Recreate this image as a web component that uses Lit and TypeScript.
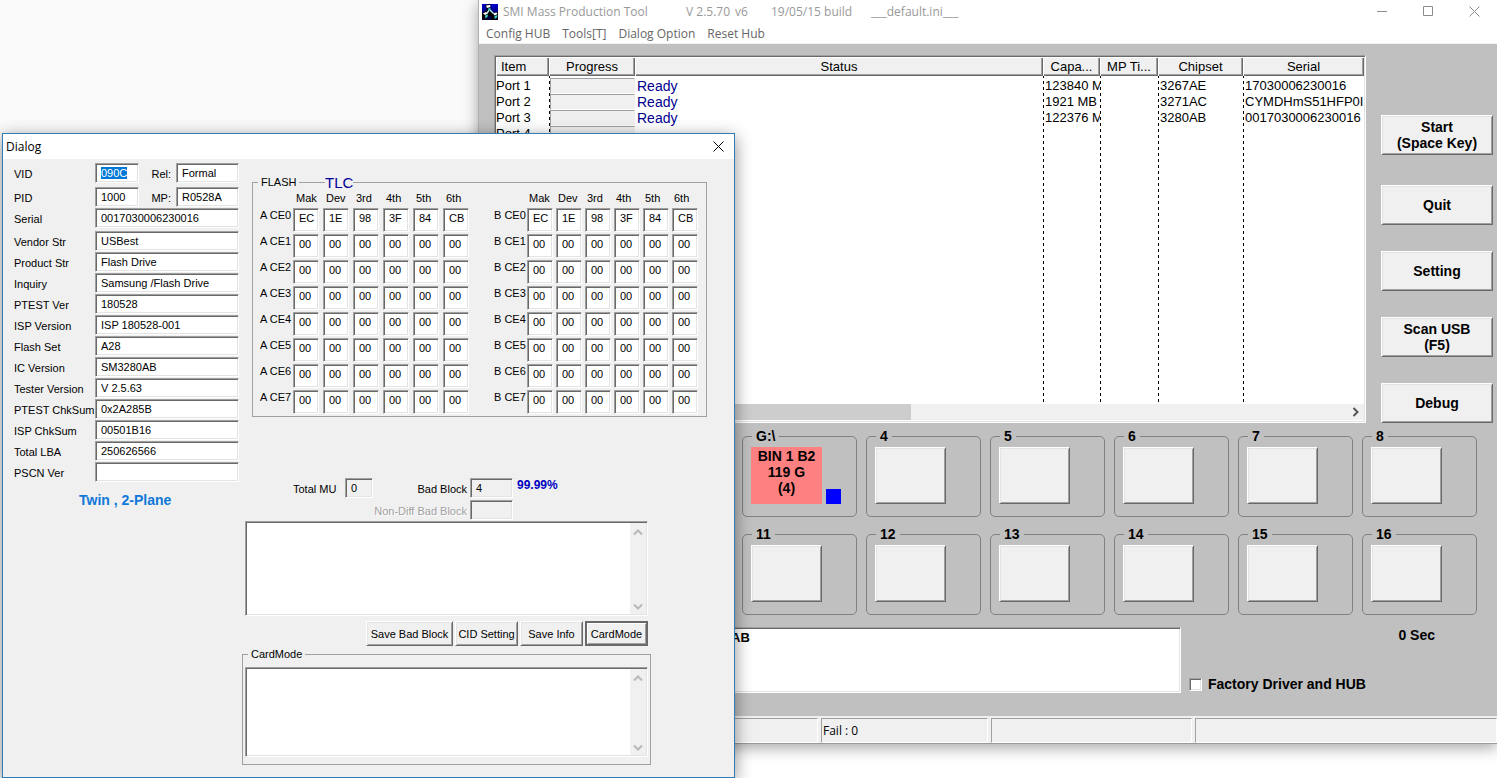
import { LitElement, html, css, svg, nothing } from "lit";
import { customElement, property } from "lit/decorators.js";
import { classMap } from "lit/directives/class-map.js";

const classic = css`
  * {
    box-sizing: border-box;
  }
  button,
  input,
  textarea {
    font: inherit;
    color: inherit;
    margin: 0;
    border-radius: 0;
    outline: none;
  }
  fieldset {
    margin: 0;
    padding: 0;
    min-width: 0;
  }
  .raised {
    padding: 0;
    background: #f0f0f0;
    border: 1px solid;
    border-color: #fff #696969 #696969 #fff;
    box-shadow: inset 1px 1px #e3e3e3, inset -1px -1px #a0a0a0;
  }
  .sunken {
    background: #fff;
    border: 1px solid;
    border-color: #a0a0a0 #fff #fff #a0a0a0;
    box-shadow: inset 1px 1px #696969, inset -1px -1px #e3e3e3;
  }
`;

const closeGlyph = svg`<path d="M0.5 0.5 L10.5 10.5 M10.5 0.5 L0.5 10.5" />`;

interface Port {
  label: string;
  lines?: string[];
}

const PORT_ROWS: Port[][] = [
  [
    { label: "G:\\", lines: ["BIN 1 B2", "119 G", "(4)"] },
    { label: "4" },
    { label: "5" },
    { label: "6" },
    { label: "7" },
    { label: "8" },
  ],
  ["11", "12", "13", "14", "15", "16"].map((label) => ({ label })),
];

const DEVICES = [
  ["Port 1", "Ready", "123840 M", "", "3267AE", "17030006230016"],
  ["Port 2", "Ready", "1921 MB", "", "3271AC", "CYMDHmS51HFP0I"],
  ["Port 3", "Ready", "122376 M", "", "3280AB", "0017030006230016"],
  ["Port 4", "", "", "", "", ""],
];

@customElement("production-window")
export class ProductionWindow extends LitElement {
  static styles = [
    classic,
    css`
      :host {
        display: block;
        background: #fff;
        border-left: 1px solid #b0b0b0;
        border-bottom: 1px solid #999;
        box-shadow: 0 4px 14px rgba(0, 0, 0, 0.35);
        font: 13px/16px "Liberation Sans", Arial, sans-serif;
        color: #000;
      }
      .title {
        display: flex;
        align-items: center;
        height: 23px;
        padding-left: 3px;
        font: 12px/16px "Open Sans", "Noto Sans", sans-serif;
        color: #999;
        white-space: pre;
      }
      .title .logo {
        width: 16px;
        height: 16px;
        margin-right: 5px;
      }
      .name {
        width: 183px;
      }
      .version {
        width: 49px;
      }
      .revision {
        width: 36px;
      }
      .build {
        width: 100px;
      }
      .controls {
        display: flex;
        margin-left: auto;
      }
      .controls button {
        width: 46px;
        height: 23px;
        padding: 0;
        border: 0;
        background: none;
      }
      .controls svg {
        display: block;
        margin: auto;
        fill: none;
        stroke: #8c8c8c;
      }
      .menu {
        display: flex;
        gap: 12px;
        height: 21px;
        padding: 2px 0 0 7px;
        border-bottom: 1px solid #f0f0f0;
        font: 12px/16px "Open Sans", "Noto Sans", sans-serif;
      }
      .menu button {
        padding: 0;
        border: 0;
        background: none;
        color: #666;
      }
      .client {
        padding: 11px 4px 23px 15px;
        background: #c0c0c0;
      }
      .upper {
        display: flex;
        gap: 15px;
      }
      .list {
        flex: 1;
        min-width: 0;
        padding: 1px;
        overflow: hidden;
      }
      table {
        width: 100%;
        table-layout: fixed;
        border-collapse: collapse;
      }
      .c-item {
        width: 53px;
      }
      .c-progress {
        width: 86px;
      }
      .c-capacity {
        width: 57px;
      }
      .c-time {
        width: 58px;
      }
      .c-chip {
        width: 85px;
      }
      .c-serial {
        width: 121px;
      }
      .ruled {
        background: repeating-linear-gradient(#000 0 3px, transparent 3px 6px) left top / 1px 100% no-repeat;
      }
      th {
        height: 19px;
        padding: 0 5px;
        overflow: hidden;
        background: #f0f0f0;
        box-shadow: inset 1px 1px #fff, inset -1px -1px #696969, inset -2px -2px #a0a0a0;
        font-weight: normal;
        text-overflow: ellipsis;
        white-space: nowrap;
      }
      th.left {
        text-align: left;
      }
      td {
        height: 16px;
        padding: 0 0 0 2px;
        overflow: hidden;
        white-space: nowrap;
      }
      td.item {
        padding-left: 0;
      }
      td.meter {
        padding: 0 0 0 1px;
      }
      td.ready {
        color: #000090;
        font-size: 14px;
      }
      .bar {
        height: 16px;
        background: #f0f0f0;
        border: 1px solid;
        border-color: #a0a0a0 #f0f0f0 #fff #a0a0a0;
      }
      .gap td {
        height: 2px;
      }
      .rest td {
        height: 262px;
      }
      .scroll {
        display: flex;
        align-items: center;
        height: 16px;
        padding: 0 4px 0 16px;
        background: #f0f0f0;
      }
      .thumb {
        width: 47%;
        height: 16px;
        margin-right: auto;
        background: #cdcdcd;
      }
      .commands {
        display: flex;
        flex-direction: column;
        gap: 26px;
        width: 112px;
        padding-top: 60px;
      }
      .commands button {
        height: 40px;
        font-size: 14px;
        font-weight: bold;
        white-space: pre-line;
      }
      .commands .primary {
        margin-bottom: 4px;
      }
      .ports {
        display: grid;
        grid-template-columns: repeat(8, 1fr);
        gap: 9px;
        padding: 5px 16px 0 0;
        font-size: 14px;
        font-weight: bold;
      }
      .vacant {
        grid-column: span 2;
      }
      .port {
        height: 89px;
        border: 1px solid #808080;
        border-radius: 5px;
      }
      .port legend {
        margin-left: 9px;
        padding: 0 4px;
      }
      .slot {
        display: flex;
        align-items: flex-end;
        gap: 4px;
        padding: 3px 0 0 8px;
      }
      .slot button {
        width: 71px;
        height: 57px;
      }
      .slot .pass {
        padding: 0 0 8px;
        background: #ff8080;
        border: 0;
        box-shadow: none;
      }
      .pass span {
        display: block;
      }
      .lamp {
        width: 15px;
        height: 15px;
        background: #00f;
      }
      .lower {
        display: flex;
        gap: 8px;
        padding-top: 12px;
        font-size: 14px;
        font-weight: bold;
      }
      .log {
        flex: 1;
        min-width: 0;
        height: 66px;
        padding: 2px 4px 0 236px;
        font-size: 13px;
        resize: none;
        overflow: hidden;
      }
      .side {
        display: flex;
        flex-direction: column;
        justify-content: space-between;
        width: 304px;
        padding-bottom: 1px;
      }
      .timer {
        padding-right: 58px;
        text-align: right;
      }
      .check {
        display: flex;
        align-items: center;
        gap: 6px;
      }
      .check input {
        appearance: none;
        width: 13px;
        height: 13px;
      }
      .status {
        display: grid;
        grid-template-columns: 339px 167px 201px 1fr;
        gap: 3px;
        padding: 2px 0 0;
        background: #f0f0f0;
        font: 12px/16px "Open Sans", "Noto Sans", sans-serif;
      }
      .status span {
        height: 25px;
        padding: 4px 0 0 1px;
        border: 1px solid;
        border-color: #a0a0a0 #fff #fff #a0a0a0;
      }
    `,
  ];

  private renderPort(port: Port) {
    return html`<fieldset class="port">
      <legend>${port.label}</legend>
      <div class="slot">
        <button
          class=${classMap({ raised: true, pass: !!port.lines })}
          aria-label=${port.lines ? nothing : `Port ${port.label}`}
        >
          ${port.lines?.map((line) => html`<span>${line}</span>`)}
        </button>
        ${port.lines ? html`<div class="lamp"></div>` : nothing}
      </div>
    </fieldset>`;
  }

  render() {
    return html`
      <header class="title">
        <svg class="logo" viewBox="0 0 16 16">
          <defs>
            <linearGradient id="sky" x1="0" y1="0" x2="0" y2="1">
              <stop offset="0" stop-color="#0000d0" />
              <stop offset="1" stop-color="#000030" />
            </linearGradient>
          </defs>
          <rect width="16" height="16" fill="url(#sky)" />
          <path d="M3 1 L8 0 L9 6 L12 9 L16 8 V15 L10 16 L9 12 L6 12 L5 16 L0 14 V9 L4 7 L5 6 Z" fill="#000" />
          <path d="M4 1.5 L8 1 L8.5 3 L5 4 Z M1 9.5 L4 8 L6 9.5 L3 11 Z M11 9.5 L14.5 8.5 L15.5 10 L12.5 11.5 Z" fill="#fff" />
          <path d="M6 4.5 L8.5 4 L8.5 6 L6.5 7 Z M3 11.5 L6 10.5 L5.5 13 L3.5 14.5 Z M12.5 12 L15.5 11 L15 13.5 L12.5 15 Z" fill="#40d0d0" />
          <path d="M7 6.5 L5 9 M8 6 L11.5 9.5" stroke="#b0f0f0" stroke-width="1.4" fill="none" />
        </svg>
        <span class="name">SMI Mass Production Tool</span>
        <span class="version">V 2.5.70</span>
        <span class="revision">v6</span>
        <span class="build">19/05/15 build</span>
        <span>___default.ini___</span>
        <div class="controls">
          <button aria-label="Minimize"><svg width="11" height="11"><path d="M0 5.5 H10" /></svg></button>
          <button aria-label="Maximize"><svg width="11" height="11"><path d="M0.5 0.5 H9.5 V9.5 H0.5 Z" /></svg></button>
          <button aria-label="Close"><svg width="11" height="11">${closeGlyph}</svg></button>
        </div>
      </header>
      <nav class="menu">
        ${["Config HUB", "Tools[T]", "Dialog Option", "Reset Hub"].map((m) => html`<button>${m}</button>`)}
      </nav>
      <main class="client">
        <div class="upper">
          <div class="list sunken">
            <table>
              <colgroup>
                <col class="c-item" />
                <col class="c-progress ruled" />
                <col />
                <col class="c-capacity ruled" />
                <col class="c-time ruled" />
                <col class="c-chip ruled" />
                <col class="c-serial ruled" />
              </colgroup>
              <thead>
                <tr>
                  <th class="left">Item</th>
                  <th>Progress</th>
                  <th>Status</th>
                  <th>Capa...</th>
                  <th>MP Ti...</th>
                  <th>Chipset</th>
                  <th>Serial</th>
                </tr>
              </thead>
              <tbody>
                <tr class="gap"><td></td><td></td><td></td><td></td><td></td><td></td><td></td></tr>
                ${DEVICES.map(
                  ([item, state, capacity, time, chip, serial]) => html`<tr>
                    <td class="item">${item}</td>
                    <td class="meter"><div class="bar"></div></td>
                    <td class="ready">${state}</td>
                    <td>${capacity}</td>
                    <td>${time}</td>
                    <td>${chip}</td>
                    <td>${serial}</td>
                  </tr>`,
                )}
                <tr class="rest"><td></td><td></td><td></td><td></td><td></td><td></td><td></td></tr>
              </tbody>
            </table>
            <div class="scroll">
              <div class="thumb"></div>
              <svg width="8" height="10" fill="none" stroke="#555" stroke-width="2"><path d="M1.5 1 L5.5 5 L1.5 9" /></svg>
            </div>
          </div>
          <div class="commands">
            <button class="raised primary">${"Start\n(Space Key)"}</button>
            <button class="raised">Quit</button>
            <button class="raised">Setting</button>
            <button class="raised">${"Scan USB\n(F5)"}</button>
            <button class="raised">Debug</button>
          </div>
        </div>
        <div class="ports">
          ${PORT_ROWS.map((row) => html`<div class="vacant"></div>${row.map((p) => this.renderPort(p))}`)}
        </div>
        <div class="lower">
          <textarea class="log sunken" aria-label="Log" .value=${"AB"}></textarea>
          <div class="side">
            <div class="timer">0 Sec</div>
            <label class="check"><input type="checkbox" class="sunken" />Factory Driver and HUB</label>
          </div>
        </div>
      </main>
      <footer class="status"><span></span><span>Fail : 0</span><span></span><span></span></footer>
    `;
  }
}

const FIELDS: [string, string][] = [
  ["Vendor Str", "USBest"],
  ["Product Str", "Flash Drive"],
  ["Inquiry", "Samsung /Flash Drive"],
  ["PTEST Ver", "180528"],
  ["ISP Version", "ISP 180528-001"],
  ["Flash Set", "A28"],
  ["IC Version", "SM3280AB"],
  ["Tester Version", "V 2.5.63"],
  ["PTEST ChkSum", "0x2A285B"],
  ["ISP ChkSum", "00501B16"],
  ["Total LBA", "250626566"],
  ["PSCN Ver", ""],
];

const FLASH_HEADS = ["Mak", "Dev", "3rd", "4th", "5th", "6th"];
const FLASH_ID = ["EC", "1E", "98", "3F", "84", "CB"];

@customElement("flash-table")
export class FlashTable extends LitElement {
  @property() bank = "A";

  static styles = [
    classic,
    css`
      :host {
        display: block;
      }
      table {
        border-collapse: collapse;
      }
      th {
        padding: 0;
        font-weight: normal;
        text-align: left;
        vertical-align: top;
        white-space: nowrap;
      }
      thead th {
        height: 17px;
        padding-left: 3px;
      }
      thead th.corner {
        width: 33px;
        padding: 0;
      }
      td {
        height: 26px;
        padding: 0 4px 0 0;
        vertical-align: top;
      }
      :host([bank="B"]) td {
        padding-right: 3px;
      }
      :host([bank="B"]) thead th {
        padding-left: 2px;
      }
      input {
        display: block;
        width: 26px;
        height: 24px;
        padding: 0 0 4px 5px;
      }
    `,
  ];

  render() {
    return html`<table>
      <thead>
        <tr>
          <th class="corner"></th>
          ${FLASH_HEADS.map((h) => html`<th>${h}</th>`)}
        </tr>
      </thead>
      <tbody>
        ${[0, 1, 2, 3, 4, 5, 6, 7].map(
          (ce) => html`<tr>
            <th>${this.bank} CE${ce}</th>
            ${FLASH_HEADS.map(
              (h, i) => html`<td>
                <input class="sunken" aria-label="${this.bank} CE${ce} ${h}" .value=${ce === 0 ? FLASH_ID[i] : "00"} />
              </td>`,
            )}
          </tr>`,
        )}
      </tbody>
    </table>`;
  }
}

@customElement("info-dialog")
export class InfoDialog extends LitElement {
  static styles = [
    classic,
    css`
      :host {
        display: block;
        background: #f0f0f0;
        border: 1px solid #2f7db4;
        box-shadow: 0 4px 16px rgba(0, 0, 0, 0.45);
        font: 11px/14px "Liberation Sans", Arial, sans-serif;
        color: #000;
        box-sizing: border-box;
      }
      .title {
        display: flex;
        align-items: center;
        justify-content: space-between;
        height: 25px;
        padding-left: 3px;
        background: #fff;
        font: 12px/16px "Open Sans", "Noto Sans", sans-serif;
      }
      .title button {
        width: 32px;
        height: 25px;
        padding: 0;
        border: 0;
        background: none;
      }
      .title svg {
        display: block;
        margin: auto;
        fill: none;
        stroke: #000;
      }
      .body {
        display: grid;
        grid-template-columns: 225px 1fr;
        gap: 3px;
        padding: 4px 27px 12px 11px;
      }
      .field {
        display: flex;
        height: 21px;
      }
      .field.tall {
        height: 24px;
      }
      .field.wide {
        height: 23px;
      }
      .field label {
        width: 81px;
        padding-top: 4px;
        white-space: nowrap;
      }
      .field .minor {
        width: 37px;
        padding-right: 5px;
        text-align: right;
      }
      .field input {
        flex: 1;
        min-width: 0;
        height: 20px;
        padding: 0 0 0 5px;
      }
      .field .short {
        flex: none;
        width: 44px;
      }
      input::selection {
        background: #0078d7;
        color: #fff;
      }
      .plane {
        padding: 9px 0 0 65px;
        color: #0f78d8;
        font-size: 14px;
        font-weight: bold;
        line-height: 16px;
      }
      .group {
        border: 1px solid #a0a0a0;
      }
      .group legend {
        margin-left: 5px;
        padding: 0 3px;
        background: #f0f0f0;
      }
      .flash {
        position: relative;
        margin: 12px 0 0 10px;
      }
      .flash .type {
        position: absolute;
        left: 72px;
        top: -15px;
        background: #f0f0f0;
        color: #00009c;
        font-size: 15px;
        line-height: 18px;
      }
      .banks {
        display: flex;
        justify-content: space-between;
        padding: 2px 5px 0 7px;
      }
      .counts {
        display: grid;
        grid-template-columns: 52px 28px 97px 43px auto;
        row-gap: 2px;
        padding: 61px 0 1px 48px;
      }
      .counts label {
        padding-top: 4px;
      }
      .counts .end {
        padding-right: 3px;
        text-align: right;
      }
      .counts .off {
        grid-column: 1 / 4;
        color: #a0a0a0;
        text-shadow: 1px 1px #fff;
      }
      .counts input {
        width: 100%;
        height: 20px;
        padding: 0 0 0 5px;
        background: #f0f0f0;
      }
      .rate {
        padding-left: 4px;
        color: #0000c0;
        font-size: 12px;
        font-weight: bold;
      }
      .memo {
        display: flex;
        width: 403px;
        padding: 1px;
      }
      .memo textarea {
        flex: 1;
        padding: 2px;
        border: 0;
        background: #fff;
        resize: none;
        overflow: hidden;
      }
      .memo.first {
        height: 95px;
      }
      .memo.second {
        height: 90px;
      }
      .rail {
        display: flex;
        flex-direction: column;
        justify-content: space-between;
        align-items: center;
        width: 16px;
        padding: 6px 0 4px;
        background: #f0f0f0;
      }
      .rail svg {
        fill: none;
        stroke: #b8b8b8;
        stroke-width: 2;
      }
      .actions {
        display: flex;
        justify-content: flex-end;
        gap: 2px;
        width: 403px;
        padding-top: 5px;
      }
      .actions button {
        width: 63px;
        height: 25px;
        white-space: nowrap;
      }
      .actions .large {
        width: 87px;
      }
      .actions .default {
        border: 2px solid #696969;
        box-shadow: inset 1px 1px #fff, inset -1px -1px #a0a0a0;
      }
      .panel {
        padding-left: 3px;
      }
      .card {
        width: 409px;
        margin-top: 1px;
      }
      .card .memo {
        margin: 6px 2px 7px;
      }
    `,
  ];

  firstUpdated() {
    const vid = this.renderRoot.querySelector<HTMLInputElement>("#vid");
    vid?.focus();
    vid?.select();
  }

  private renderMemo(kind: string, label: string) {
    return html`<div class="memo sunken ${kind}">
      <textarea aria-label=${label}></textarea>
      <div class="rail">
        <svg width="10" height="7"><path d="M1 5.5 L5 1.5 L9 5.5" /></svg>
        <svg width="10" height="7"><path d="M1 1.5 L5 5.5 L9 1.5" /></svg>
      </div>
    </div>`;
  }

  render() {
    return html`
      <header class="title">
        <span>Dialog</span>
        <button aria-label="Close"><svg width="11" height="11">${closeGlyph}</svg></button>
      </header>
      <div class="body">
        <div>
          <div class="field tall">
            <label for="vid">VID</label><input id="vid" class="sunken short" .value=${"090C"} />
            <label class="minor" for="rel">Rel:</label><input id="rel" class="sunken" .value=${"Formal"} />
          </div>
          <div class="field">
            <label for="pid">PID</label><input id="pid" class="sunken short" .value=${"1000"} />
            <label class="minor" for="mp">MP:</label><input id="mp" class="sunken" .value=${"R0528A"} />
          </div>
          <div class="field wide">
            <label for="serial">Serial</label><input id="serial" class="sunken" .value=${"0017030006230016"} />
          </div>
          ${FIELDS.map(
            ([label, value], i) => html`<div class="field">
              <label for="field-${i}">${label}</label><input id="field-${i}" class="sunken" .value=${value} />
            </div>`,
          )}
          <div class="plane">Twin , 2-Plane</div>
        </div>
        <div>
          <fieldset class="group flash">
            <legend>FLASH</legend>
            <span class="type">TLC</span>
            <div class="banks">
              <flash-table bank="A"></flash-table>
              <flash-table bank="B"></flash-table>
            </div>
          </fieldset>
          <div class="panel">
            <div class="counts">
              <label for="mu">Total MU</label><input id="mu" class="sunken" readonly .value=${"0"} />
              <label class="end" for="bad">Bad Block</label><input id="bad" class="sunken" readonly .value=${"4"} />
              <span class="rate">99.99%</span>
              <label class="end off" for="diff">Non-Diff Bad Block</label><input id="diff" class="sunken" disabled />
            </div>
            ${this.renderMemo("first", "Block information")}
            <div class="actions">
              <button class="raised large">Save Bad Block</button>
              <button class="raised">CID Setting</button>
              <button class="raised">Save Info</button>
              <button class="raised default">CardMode</button>
            </div>
          </div>
          <fieldset class="group card">
            <legend>CardMode</legend>
            ${this.renderMemo("second", "Card mode output")}
          </fieldset>
        </div>
      </div>
    `;
  }
}

@customElement("app-root")
export class AppRoot extends LitElement {
  static styles = css`
    :host {
      display: block;
      position: relative;
      min-height: 100vh;
      overflow: hidden;
      background: linear-gradient(90deg, #fafafa 478px, #fff 478px);
    }
    production-window {
      position: absolute;
      top: 0;
      left: 478px;
      right: 0;
    }
    info-dialog {
      position: absolute;
      top: 133px;
      left: 2px;
      width: 733px;
    }
  `;

  render() {
    return html`<production-window></production-window><info-dialog></info-dialog>`;
  }
}
